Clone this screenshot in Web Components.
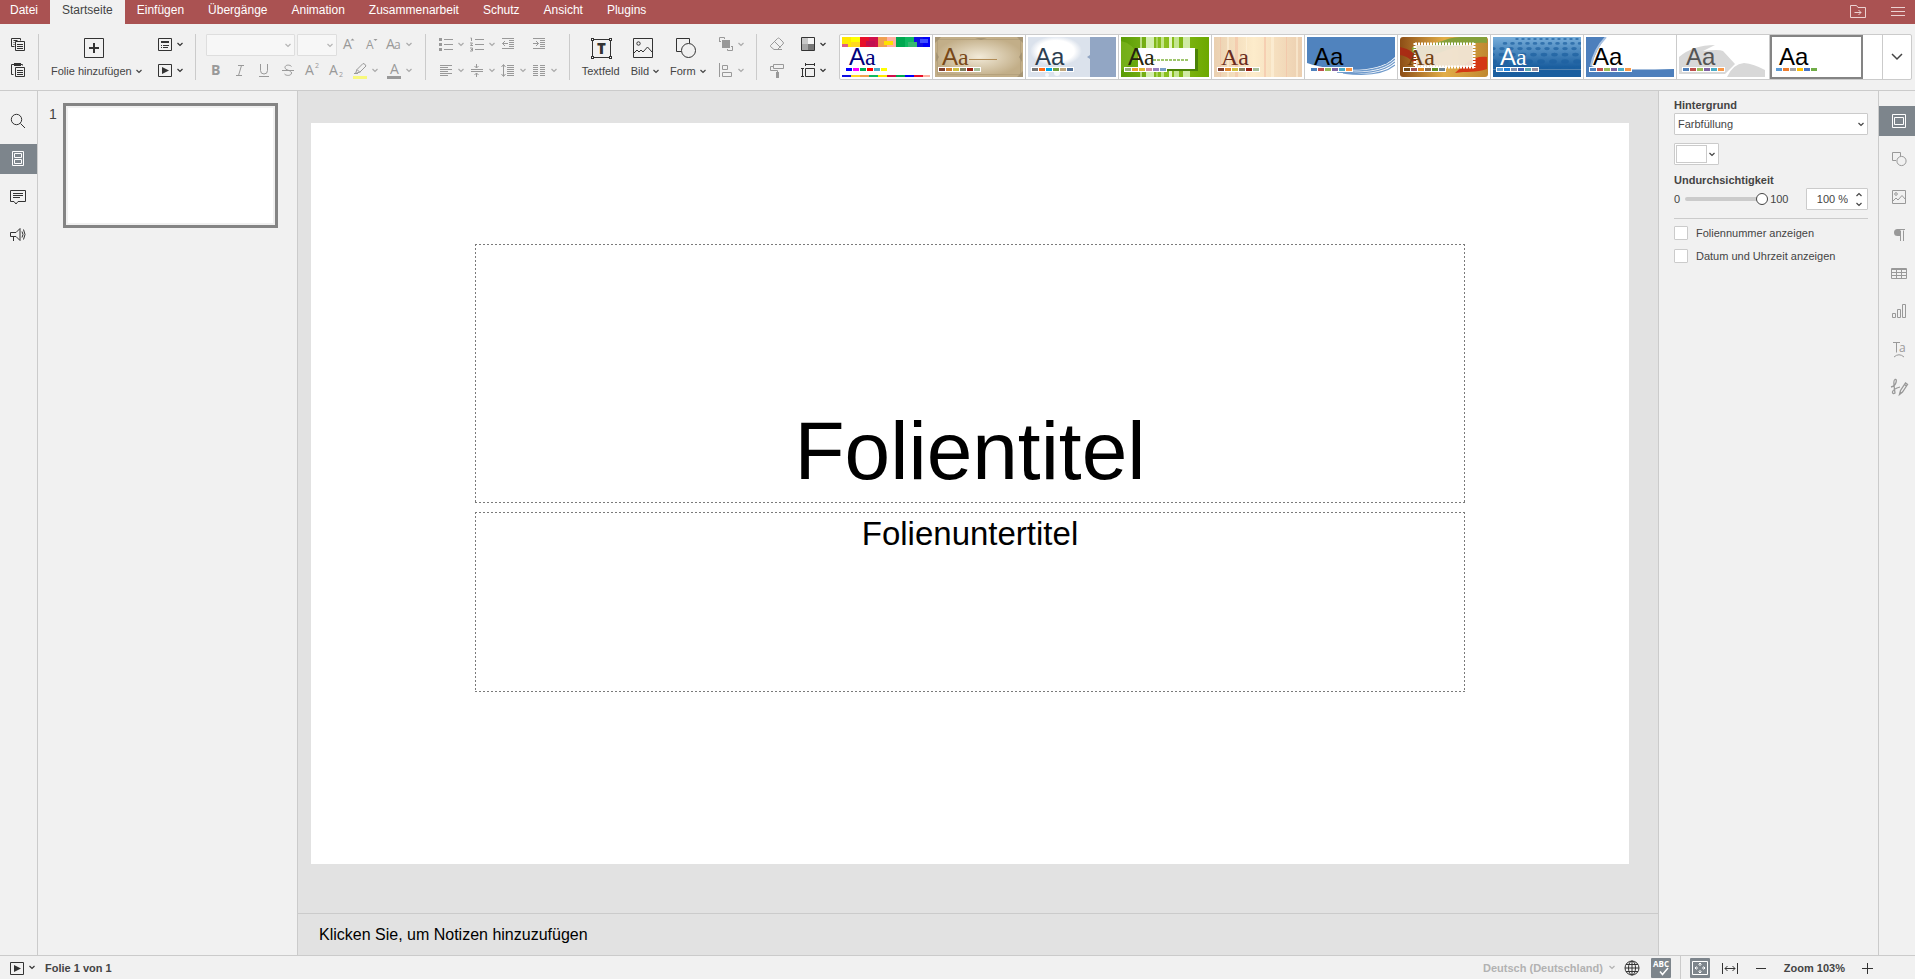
<!DOCTYPE html>
<html lang="de">
<head>
<meta charset="utf-8">
<title>Präsentation</title>
<style>
html, body { margin: 0; height: 100%; }
body { font: 11px/14px "Liberation Sans", Arial, sans-serif; color: #444; background: #f1f1f1; }
</style>
</head>
<body>
<slide-editor></slide-editor>
<script>
const ICONS = {
  copy: '<path d="M4.5 10.5H1.5V2.5h9v2M3.500 4.500h4M3.500 6.500h1M3.500 8.500h1"/><path d="M5.500 5.500h9v9h-9zM7 8.500h6M7 10.500h6M7 12.500h6"/>',
  paste: '<path d="M3.500 12.500h-2v-10h3m6 0h2v1M5.500 5.500h9v9h-9zM7 8.500h6M7 10.500h6M7 12.500h6"/><path d="M4 1h7v3H4z" fill="currentColor" stroke="none"/>',
  layout: '<path d="M1.500 2.500h13v12h-13z"/><path d="M4 5h8v2H4zM4 9h1v1H4zM4 11h1v1H4zM6 9h6v1H6zM6 11h5v1H6z" fill="currentColor" stroke="none"/>',
  play: '<path d="M1.500 2.500h13v12h-13z"/><path d="M5 5l7 3.500L5 12z" fill="currentColor" stroke="none"/>',
  incfont: '<text x="5" y="13" font-size="14">A</text><path d="M12.500 4.500l2-2 2 2z" fill="currentColor" stroke="none"/>',
  decfont: '<text x="4" y="13" font-size="12">A</text><path d="M11.500 3l2 2 2-2z" fill="currentColor" stroke="none"/>',
  case: '<text x="0" y="13" font-size="14">A</text><text x="8" y="13" font-size="12">a</text>',
  bold: '<text x="3" y="13" font-size="14" font-weight="700">B</text>',
  italic: '<path d="M6 3.500h6M4 13.500h6M9.500 3.500l-3 10"/>',
  underline: '<path d="M4.500 2v6.500a3.500 3.500 0 0 0 7 0V2M3 14.500h10"/>',
  strike: '<path d="M11.500 4.500C10 2.500 5 2.500 5 5.500S11.500 8 11.500 11 6 14 4.500 12M2 8.500h12"/>',
  sup: '<text x="1" y="13" font-size="14">A</text><text x="11" y="6" font-size="7">2</text>',
  sub: '<text x="1" y="13" font-size="14">A</text><text x="11" y="15" font-size="7">2</text>',
  marker: '<path d="M3.500 11.500l1.500-4 6-6q2 0 3 2.500l-6 6zM5 7.500l3 3M2 11.500h4"/><path d="M1 14h14v3H1z" fill="#f8f87c" stroke="none"/>',
  fcolor: '<text x="4" y="12" font-size="14">A</text><path d="M1 14h14v3H1z" fill="currentColor" stroke="none"/>',
  bullets: '<path d="M6 3.500h9M6 8.500h9M6 13.500h9"/><path d="M1 2h3v3H1zM1 7h3v3H1zM1 12h3v3H1z" fill="currentColor" stroke="none"/>',
  numbers: '<path d="M6 3.500h9M6 8.500h9M6 13.500h9M1.500 2h1v3M1 7h2.500l-2 2.500H4M1 12h2.500v3H1M2 13.500h1"/>',
  outdent: '<path d="M2 2.500h12M9 4.500h5M9 6.500h5M9 8.500h5M9 10.500h5M2 12.500h12M2.500 7.500H8M5 5L2.500 7.500 5 10"/>',
  indent: '<path d="M2 2.500h12M9 4.500h5M9 6.500h5M9 8.500h5M9 10.500h5M2 12.500h12M2 7.500h5.500M5 5l2.500 2.500L5 10"/>',
  alignl: '<path d="M2 3.500h12M2 5.500h8M2 7.500h12M2 9.500h8M2 11.500h12M2 13.500h8"/>',
  valign: '<path d="M2 7.500h12M2 9.500h12M7.500 2v4M5.500 4l2 2 2-2M7.500 15v-4M5.500 13l2-2 2 2"/>',
  spacing: '<path d="M7 3.500h7M7 5.500h7M7 7.500h7M7 9.500h7M7 11.500h7M7 13.500h7M3.500 3v11M1.500 5l2-2.500 2 2.500M1.500 12l2 2.500 2-2.500"/>',
  columns: '<path d="M2 3.500h5M2 5.500h5M2 7.500h5M2 9.500h5M2 11.500h5M2 13.500h5M9 3.500h5M9 5.500h5M9 7.500h5M9 9.500h5M9 11.500h5M9 13.500h5"/>',
  arrange: '<path d="M1.500 6V1.500h5V3M2 5.500h1M14.500 10v4.500h-5V13M13 10.500h1"/><path d="M4 4h8v8H4z" fill="currentColor" stroke="none"/>',
  align: '<path d="M1.500 1v14M4.500 3.500h5v4h-5zM4.500 10.500h9v4h-9z"/>',
  eraser: '<path d="M1.500 9.500l7-7q1-1 2 0l3.500 3.500q1 1 0 2l-5.500 5.500H5l-3.500-3zM5.500 5.500l6 6M5 13.500h8"/>',
  painter: '<path d="M4.500 2.500h10v4h-10zM4.500 4.500h-3v4h7v2"/><path d="M7 10h3v6H7z" fill="currentColor" stroke="none"/>',
  scheme: '<path d="M2 2h6v6H2z" fill="#c8c8c8" stroke="none"/><path d="M8 2h6v6H8z" fill="#f4f4f4" stroke="none"/><path d="M2 8h6v6H2z" fill="#a6a6a6" stroke="none"/><path d="M8 8h6v6H8z" fill="#777" stroke="none"/><path d="M1.500 1.500h13v13h-13z"/>',
  size: '<path d="M5.500 6.500h9v8h-9zM5 2.500h10M5.500 1v3M14.500 1v3M2.500 6v9M1 6.500h3M1 14.500h3"/>',
  search: '<circle cx="6.500" cy="6.500" r="5.200"/><path d="M10.500 10.500l4.500 4.500"/>',
  slides: '<path d="M2.500.5h11v14h-11zM4.500 2.500h7v4h-7zM4.500 8.500h7v4h-7z"/>',
  comment: '<path d="M.5 1.500h15v11H8l-2 2.500-2-2.500H.5zM3 4.500h10M3 6.500h10M3 8.500h7"/>',
  speaker: '<path d="M.5 5.500h5.500l4-4v12L6 9.500H.5zM3.500 10v4M12 4.500q2 3 0 6M13.500 2.500q3 5 0 10"/>',
  settings: '<path d="M1.500 1.500h13v13h-13zM3.500 4.500h9v7h-9z"/>',
  shape: '<path d="M5 9.500H1.500v-8h8V5"/><circle cx="10.500" cy="10" r="4.600"/>',
  image: '<path d="M1.500 1.500h13v13h-13zM2 12l3-3 2 2 4-4.500 3.500 4"/><circle cx="5" cy="5" r="1.300"/>',
  para: '<path d="M9.500 14V3.500M12.500 14V3.500M7 2.500h7"/><path d="M9 2H6.500a3.500 3.500 0 0 0 0 7H9z" fill="currentColor" stroke="none"/>',
  table: '<path d="M.5 3.500h15v10H.5zM1 4.500h14M.5 7.500h15M.5 10.500h15M5.500 4v9M10.500 4v9"/>',
  chart: '<path d="M1.500 10.500h3v4h-3zM6.500 6.500h3v8h-3zM11.500 1.500h3v13h-3z"/>',
  textart: '<path d="M2 1.500h7M5.500 1.500v10M3 16q5-4.500 10 0"/><text x="8" y="11" font-size="12">a</text>',
  sign: '<path d="M0 8q4-1 5-4.500T4 .5Q2.500 1 3 6t1 8q-2 1.500-2.500-.5T6 9l3-1M8.500 15.500l1-4 5-7.500 2 1.500-5 7.500zM13.500 5.500l2 1.500M9 13l1.500 1" stroke-width="1.300"/>',
  abc: '<text x="0" y="7" font-size="8" font-weight="700">ABC</text><path d="M7 11.500l2.500 3L15 8" stroke-width="1.500"/>',
  globe: '<circle cx="8" cy="8" r="7"/><ellipse cx="8" cy="8" rx="3.500" ry="7"/><path d="M8 1v14M1 8h14M2 4.500h12M2 11.500h12"/>',
  fitslide: '<path d="M.5 1.500h15v13H.5zM8 3v3M8 10v3M3 8h3M10 8h3M6.500 4.500L8 3l1.500 1.500M6.500 11.500L8 13l1.500-1.500M4.500 6.500L3 8l1.500 1.500M11.500 6.500L13 8l-1.500 1.500"/>',
  fitwidth: '<path d="M.5 3v11M15.500 3v11M3 8.500h10M5.500 6L3 8.500 5.500 11M10.500 6L13 8.500 10.500 11"/>',
  minus: '<path d="M3 8.500h10"/>',
  plus: '<path d="M3 8.500h11M8.500 3v11"/>',
  folder: '<path d="M.5 14.500v-12h6l1.500 2h7.500v10zM4.500 9.500h6.500M8.500 7l2.500 2.500L8.500 12"/>',
  menu: '<path d="M1 4.500h14M1 8.500h14M1 12.500h14"/>',
  addslide: '<path d="M2.500 2.500h19v19h-19z"/><path d="M12 7v10M7 12h10" stroke-width="2"/>',
  textbox: '<path d="M3.500 3.500h18v18h-18z"/><path d="M2 2h3v3H2zM20 2h3v3h-3zM2 20h3v3H2zM20 20h3v3h-3z" fill="currentColor" stroke="none"/><path d="M3 3h1v1H3zM21 3h1v1h-1zM3 21h1v1H3zM21 21h1v1h-1z" fill="#fff" stroke="none"/><text x="8" y="18" font-size="15" font-weight="800">T</text>',
  bigimage: '<path d="M2.500 2.500h19v19h-19zM3 17l3-3 2 2 2-2 2 2 4.500-5 4.500 5"/><circle cx="7.500" cy="7.500" r="1.700"/>',
  bigshape: '<path d="M7 15.500H2.500v-13h13V7"/><circle cx="14.500" cy="14.500" r="7"/>',
};
const define = (name, html) => customElements.define(name, class extends HTMLElement {
  constructor() {
    super();
    this.attachShadow({ mode: 'open' });
  }
  connectedCallback() {
    this.shadowRoot.innerHTML = typeof html === 'function' ? html(this) : html;
  }
});

/* One line icon; "large" uses the 24 pixel grid. */
define('ui-icon', el => {
  const s = el.hasAttribute('large') ? 24 : 16;
  return `<style>:host{display:block;width:${s}px;height:${s}px;flex:none}
  svg{display:block;overflow:visible;fill:none;stroke:currentColor}
  text{fill:currentColor;stroke:none;font-family:"Open Sans",sans-serif}</style>
  <svg width="${s}" height="${s}" viewBox="0 0 ${s} ${s}" aria-hidden="true">${ICONS[el.getAttribute('name')]}</svg>`;
});

define('ui-chevron', el => `<style>:host{display:block;flex:none;width:6px}svg{display:block;fill:none;stroke:currentColor;stroke-width:1.200}</style>
  <svg width="6" height="5" viewBox="0 0 6 5" aria-hidden="true"><path d="${el.hasAttribute('up') ? 'M.5 4L3 1.500 5.500 4' : 'M.5 1L3 3.500 5.500 1'}"/></svg>`);

/* Small toolbar button: icon and, when "menu" is set, an arrow. */
define('tool-button', el => `<style>
  :host{display:block;flex:none;color:#333}
  :host([off]){color:#999}
  :host([off]) ui-chevron{color:#aaa}
  :host([wide]){width:26px}
  button{display:flex;align-items:center;gap:4px;height:20px;padding:0;border:0;background:none;color:inherit;font:inherit}
  </style><button type="button" aria-label="${el.getAttribute('label') || ''}" ${el.hasAttribute('off') ? 'disabled' : ''}>
  <ui-icon name="${el.getAttribute('icon')}"></ui-icon>${el.hasAttribute('menu') ? '<ui-chevron></ui-chevron>' : ''}</button>`);

/* Tall toolbar button with a caption. */
define('big-button', el => `<style>
  :host{display:block;flex:none;color:#333}
  button{display:flex;flex-direction:column;align-items:center;gap:4px;padding:2px 0 0;border:0;background:none;color:inherit;font:inherit}
  .cap{display:flex;align-items:center;gap:4px;line-height:14px;color:#444;white-space:nowrap}
  :host([menu]) ui-icon{margin-right:4px}
  </style><button type="button"><ui-icon large name="${el.getAttribute('icon')}"></ui-icon>
  <span class="cap"><slot></slot>${el.hasAttribute('menu') ? '<ui-chevron></ui-chevron>' : ''}</span></button>`);

define('tool-group', `<style>
  :host{display:flex;flex:none;gap:15px;height:46px;padding:0 12px;border-right:1px solid #cbcbcb}
  :host([last]){border:0;padding-right:13px}
  :host([tight]){gap:11px}
  </style><slot></slot>`);

define('tool-stack', `<style>
  :host{display:grid;grid-template-rows:20px 20px;gap:6px}
  ::slotted(div){display:flex;gap:8px;align-items:center}
  :host([lists]) ::slotted(div){gap:5px}
  </style><slot></slot>`);

define('ui-select', el => `<style>
  :host{display:grid;flex:none;height:22px;align-items:center;color:#444}
  :host([off]){color:#b5b5b5}
  select,ui-chevron{grid-area:1/1}
  select{appearance:none;width:100%;height:22px;padding:0 12px 0 3px;border:1px solid #cbcbcb;border-radius:1px;background:#fff;font:inherit;color:#444;opacity:1}
  :host([off]) select{border-color:#dedede;background:#f7f7f7}
  ui-chevron{justify-self:end;margin-right:4px;pointer-events:none}
  </style><select aria-label="${el.getAttribute('label')}" ${el.hasAttribute('off') ? 'disabled' : ''}><option>${el.getAttribute('value') || ''}</option></select><ui-chevron></ui-chevron>`);

define('tab-bar', `<style>
  :host{display:flex;height:24px;background:#aa5252;color:#fff;font-size:12px}
  nav{display:flex;flex:1;margin-left:-2px}
  nav button{height:24px;padding:0 12px 4px;border:0;background:none;color:inherit;font:inherit;line-height:20px;white-space:nowrap}
  nav button[aria-current]{background:#f1f1f1;color:#444}
  .tools{display:flex;gap:24px;padding-right:9px}
  .tools button{padding:2px 0 0;border:0;background:none;color:#ecd2d2;height:20px}
  </style><nav aria-label="Registerkarten"><button>Datei</button><button aria-current="page">Startseite</button><button>Einfügen</button><button>Übergänge</button><button>Animation</button><button>Zusammenarbeit</button><button>Schutz</button><button>Ansicht</button><button>Plugins</button></nav>
  <div class="tools"><button aria-label="Dateispeicherort öffnen"><ui-icon name="folder"></ui-icon></button><button aria-label="Menü"><ui-icon name="menu"></ui-icon></button></div>`);

/* Theme previews, each on an 88 by 40 canvas. */
const R = (x, y, w, h, f, more = '') => `<rect x="${x}" y="${y}" width="${w}" height="${h}" fill="${f}" ${more}/>`;
const SANS = 'Liberation Sans', SERIF = 'Liberation Serif';
const mosaic = ['#ffe800','#ffd820','#e8102a','#d0104a','#f0a050','#ffb0a0','#00a850','#10b860','#1010e0','#0000f8'];
let dots = '';
for (let r = 0; r < 6; r++) for (let c = 0; c < 14; c++)
  dots += `<ellipse cx="${c * (6 + r * 1.5) + 24 - r * 12}" cy="${2 + r * 4 + r * r * .4}" rx="${1.8 + r * .5}" ry="${1 + r * .3}" fill="#1d5f9f" opacity=".7"/>`;
const OFFICE = '#4f81bd #c0504d #9bbb59 #8064a2 #4bacc6 #f79646';
const THEMES = [
  { c: '#00007c', f: [SANS, SERIF], s: 'blue #f0f #00b050 red #4bacc6 #ff0',
    art: R(0,0,88,40,'#fff') + mosaic.map((m, i) => R(i * 9, 0, 9, 10, m) + R(i * 9, 38, 9, 2, mosaic[(i * 3 + 8) % 10])).join('') + R(9,0,9,5,'#ff0') + R(0,7,6,3,'#e06080') + R(24,4,9,5,'#c01050') + R(42,4,9,4,'#ffe000') + R(66,5,9,5,'#38b870') + R(78,2,8,4,'#4050ff') },
  { c: '#784818', f: [SANS, SERIF], s: '#7f3f2f #d08030 #d0c040 #808060 #982010 #a8c098',
    art: '<radialGradient id="g2"><stop stop-color="#f2ead8"/><stop offset="1" stop-color="#c2ae88"/></radialGradient>' + R(0,0,88,40,'url(#g2)') + '<path d="M2.500 2.500h83v35h-83z" fill="none" stroke="#b5a27d"/><path d="M0 0h6L0 6zM88 0h-6l6 6zM88 40h-6l6-6zM40 1h12l-6 2zM1 15l3 5-3 5zM87 15l-3 5 3 5z" fill="#9b8b6e" opacity=".7"/><path d="M34 22.500h28" stroke="#b08a54"/>' },
  { c: '#2c3e50', f: [SANS, SANS], s: '#777 #ff6a13 #00a4e4 #70a040 #c0a880 #507098',
    art: '<radialGradient id="g3"><stop offset=".7" stop-color="#fff"/><stop offset="1" stop-color="#dbe2ec"/></radialGradient>' + R(0,0,88,40,'#dbe2ec') + '<ellipse cx="28" cy="14" rx="26" ry="15" fill="url(#g3)"/><circle cx="29" cy="36" r="3" fill="#f4f6f9"/><circle cx="19" cy="38" r="2" fill="#f4f6f9"/>' + R(62,0,26,40,'#92a6c4') + '<path d="M62 18l-3 2 3 2z" fill="#92a6c4"/>' },
  { c: '#26260e', f: [SANS, SERIF], s: '#98b078 #f0a030 #e0b830 #d090a0 #9880c0 #78a0c8',
    art: '<linearGradient id="g4"><stop stop-color="#5a9c06"/><stop offset=".5" stop-color="#8cc020"/><stop offset="1" stop-color="#6ca800"/></linearGradient>' + R(0,0,88,40,'url(#g4)') + '<path d="M0 4q12 2 18 16L0 34z" fill="#83ba25" opacity=".6"/>' + R(19,0,2,40,'#b8dc80') + R(25,0,8,40,'#d4eeb0') + R(35,0,2,40,'#a8d458') + R(40,0,3,40,'#c4e588') + R(48,0,3,40,'#e4f5c4') + R(53,0,5,40,'#c4e590') + R(62,0,7,40,'#d0eaa4') + R(17,12,60,22,'#4b8207') + R(17,11,57,21,'#fff') + '<path d="M32 23h36" stroke="#9fc66d" stroke-width="2" stroke-dasharray="3 1"/>' },
  { c: '#6a2c20', f: [SERIF, SERIF], s: '#7f3f2f #e08830 #d0c040 #888060 #982010 #a8c098',
    art: '<linearGradient id="g5"><stop stop-color="#ead0b0"/><stop offset=".45" stop-color="#fdeccb"/><stop offset="1" stop-color="#eccfb0"/></linearGradient>' + R(0,0,88,40,'url(#g5)') + [6,13,21,32,50,57,72,82].map((x, i) => R(x,0,i % 3 + 1,40,i % 2 ? '#fff6e0' : '#f3b9a0','opacity=".5"')).join('') },
  { c: '#000', f: [SANS, SANS], s: OFFICE,
    art: R(0,0,88,40,'#fff') + '<path d="M0 0h88v20C76 33 52 34 28 32Q12 30 0 26z" fill="#5083be"/><path d="M88 22C76 34 54 36 24 33M88 25C76 36 56 37 30 35M88 28C76 38 58 39 36 36" fill="none" stroke="#6f9acb" stroke-width="1.300"/>' },
  { c: '#704010', f: [SERIF, SERIF], s: '#704818 #a05050 #e08820 #886848 #609020 #708088',
    art: '<linearGradient id="g7"><stop stop-color="#8d4e16"/><stop offset=".5" stop-color="#e2ae48"/><stop offset="1" stop-color="#c08830"/></linearGradient>' + R(0,0,88,40,'url(#g7)','rx="3"') + '<path d="M12 10C30 12 45 0 60 0h27v6C55 3 40 22 12 20z" fill="#84a03a"/><path d="M0 10C20 14 20 30 40 34H30C14 32 14 20 0 18z" fill="#a82c14"/><path d="M55 36C66 26 74 18 87 20v12C76 36 66 34 55 36z" fill="#d43814"/><path d="M16 8h57v22H16z" fill="#f1e6d8" opacity=".93"/><path d="M15 7h59M15 30h59" stroke="#fff" stroke-width="3" stroke-dasharray="2 1"/><path d="M15 6v25M74 6v25" stroke="#fff" stroke-width="3" stroke-dasharray="2 1"/>' },
  { c: '#fff', f: [SANS, SERIF], s: '#60a0d8 #2080d8 #8090b0 #4060b0 #60a8b0 #9890a0',
    art: '<linearGradient id="g8" x2="0" y2="1"><stop stop-color="#78aeda"/><stop offset=".75" stop-color="#1a5e9f"/></linearGradient>' + R(0,0,88,40,'url(#g8)') + dots + '<path d="M0 32.500h88" stroke="#5684b0"/>' },
  { c: '#000', f: [SANS, SANS], s: OFFICE,
    art: R(0,0,88,40,'#fff') + '<path d="M0 0h20Q10 12 5 29q12 5 83 3v8H0z" fill="#4d7fbc"/><path d="M20 0Q8 12 5 29" fill="none" stroke="#a8c2e2" stroke-width="2"/>' },
  { c: '#555', f: [SANS, SANS], s: OFFICE,
    art: R(0,0,88,40,'#fff') + '<path d="M0 20Q14 8 36 8l-12 6q16-2 20 0l12 13-10 10H0zM48 40q6-13 17-14 10 1 21 7v7z" fill="#d8d8d8"/>' },
  { c: '#000', f: [SANS, SANS], s: '#5b9bd5 #ed7d31 #a5a5a5 #ffc000 #4472c4 #70ad47', art: R(0,0,88,40,'#fff'), on: 1 },
];

define('theme-gallery', `<style>
  :host{display:flex;flex:1;min-width:0;height:44px;border:1px solid #cbcbcb;border-radius:2px;background:#fff}
  .list{display:flex;flex:1;overflow:hidden;border-right:1px solid #cbcbcb}
  .list button{flex:none;width:93px;height:44px;padding:2px;border:0;border-right:1px solid #cbcbcb;background:none}
  .list button[aria-pressed=true]{border:0;box-shadow:inset 0 0 0 2px #848484}
  svg{display:block}
  .more{width:28px;padding:0 0 0 8px;border:0;background:none;color:#444}
  </style><div class="list">${THEMES.map((t, i) => `<button type="button" aria-pressed="${!!t.on}" aria-label="Design ${i + 1}"><svg width="88" height="40" viewBox="0 0 88 40">${t.art}
  <text y="28" font-size="24" fill="${t.c}"><tspan x="7" font-family="${t.f[0]}">A</tspan><tspan font-family="${t.f[1]}">a</tspan></text>
  ${R(3,30,43,5,'#fff')}${t.s.split(' ').map((c, k) => R(4 + k * 7, 31, 6, 3, c)).join('')}</svg></button>`).join('')}</div>
  <button class="more" aria-label="Weitere Designs"><svg width="12" height="8" viewBox="0 0 12 8" fill="none" stroke="currentColor" stroke-width="1.500"><path d="M1 1l5 5 5-5"/></svg></button>`);

define('main-toolbar', `<style>
  :host{display:flex;padding:10px 3px 10px 0;border-bottom:1px solid #cbcbcb;background:#f1f1f1}
  .first{padding-left:10px}
  .fonts{padding:0 13px 0 10px}
  .name{width:89px}
  .size{width:40px}
  .combos{display:flex;gap:2px;align-self:start;width:124px}
  .marks{padding-left:2px}
  .arrange{padding-left:1px}
  </style>
  <tool-group class="first"><tool-stack><div><tool-button icon="copy" label="Kopieren"></tool-button></div><div><tool-button icon="paste" label="Einfügen"></tool-button></div></tool-stack></tool-group>
  <tool-group><big-button icon="addslide" menu>Folie hinzufügen</big-button>
    <tool-stack><div><tool-button icon="layout" label="Folienlayout" menu></tool-button></div><div><tool-button icon="play" label="Vorschau" menu></tool-button></div></tool-stack></tool-group>
  <tool-group class="fonts"><tool-stack>
    <div><div class="combos"><ui-select class="name" label="Schriftart" off></ui-select><ui-select class="size" label="Schriftgröße" off></ui-select></div>
      <tool-button icon="incfont" label="Schrift vergrößern" off></tool-button><tool-button icon="decfont" label="Schrift verkleinern" off></tool-button><tool-button icon="case" label="Groß-/Kleinschreibung" menu off></tool-button></div>
    <div class="marks"><tool-button icon="bold" label="Fett" off></tool-button><tool-button icon="italic" label="Kursiv" off></tool-button><tool-button icon="underline" label="Unterstrichen" off></tool-button><tool-button icon="strike" label="Durchgestrichen" off></tool-button><tool-button icon="sup" label="Hochgestellt" off></tool-button><tool-button icon="sub" label="Tiefgestellt" off></tool-button><tool-button icon="marker" label="Texthervorhebung" menu off></tool-button><tool-button icon="fcolor" label="Schriftfarbe" menu off></tool-button></div>
  </tool-stack></tool-group>
  <tool-group><tool-stack lists>
    <div><tool-button icon="bullets" label="Aufzählung" menu off></tool-button><tool-button icon="numbers" label="Nummerierung" menu off></tool-button><tool-button wide icon="outdent" label="Einzug verkleinern" off></tool-button><tool-button wide icon="indent" label="Einzug vergrößern" off></tool-button></div>
    <div><tool-button icon="alignl" label="Horizontale Ausrichtung" menu off></tool-button><tool-button icon="valign" label="Vertikale Ausrichtung" menu off></tool-button><tool-button icon="spacing" label="Zeilenabstand" menu off></tool-button><tool-button icon="columns" label="Spalten" menu off></tool-button></div>
  </tool-stack></tool-group>
  <tool-group tight><big-button icon="textbox">Textfeld</big-button><big-button icon="bigimage" menu>Bild</big-button><big-button icon="bigshape" menu>Form</big-button>
    <tool-stack class="arrange"><div><tool-button icon="arrange" label="Anordnen" menu off></tool-button></div><div><tool-button icon="align" label="Ausrichten" menu off></tool-button></div></tool-stack></tool-group>
  <tool-group last>
    <tool-stack><div><tool-button icon="eraser" label="Formatierung löschen" off></tool-button></div><div><tool-button icon="painter" label="Format übertragen" off></tool-button></div></tool-stack>
    <tool-stack><div><tool-button icon="scheme" label="Farbschema" menu></tool-button></div><div><tool-button icon="size" label="Foliengröße" menu></tool-button></div></tool-stack></tool-group>
  <theme-gallery></theme-gallery>`);

/* Vertical strip of panel switches: "icons" lists them, "active" is the index of the open one. */
define('side-rail', el => `<style>
  :host{display:flex;flex-direction:column;gap:8px;padding-top:15px;background:#f1f1f1;color:#333}
  :host([muted]){color:#999}
  button{display:flex;align-items:center;height:30px;width:100%;padding:0 0 0 10px;border:0;background:none;color:inherit}
  :host([muted]) button{padding-left:12px}
  button[aria-pressed=true]{background:#7d858c;color:#fff}
  </style>${el.getAttribute('icons').split(' ').map((n, i) => `<button type="button" aria-label="${n}" aria-pressed="${i === +el.getAttribute('active')}"><ui-icon name="${n}"></ui-icon></button>`).join('')}`);

define('slide-list', `<style>
  :host{display:block;padding:12px 19px 0 11px;background:#f1f1f1;border:solid #cbcbcb;border-width:0 1px}
  ol{display:flex;margin:0;padding:0;list-style:none}
  li{display:grid;grid-template-columns:14px 1fr;flex:1}
  .no{font-size:14px;line-height:22px}
  .thumb{border:3px solid #848484;padding:2px;background:#f1f1f1}
  .thumb div{background:#fff;height:115px}
  </style><ol><li><span class="no">1</span><div class="thumb"><div></div></div></li></ol>`);

define('slide-canvas', `<style>
  :host{display:grid;grid-template-rows:1fr 42px;min-width:0;background:#e2e2e2;color:#000}
  .view{padding:32px 29px 0 13px;overflow:hidden}
  .slide{display:grid;aspect-ratio:16/9;background:#fff;grid-template-columns:164fr 990fr 164fr;grid-template-rows:121fr 259fr 9fr 180fr 172fr}
  .ph{grid-column:2;min-height:0;text-align:center;
    --h:repeating-linear-gradient(90deg,#7a7a7a 0 2px,#0000 2px 4px);--v:repeating-linear-gradient(#7a7a7a 0 2px,#0000 2px 4px);
    background:var(--h) top/100% 1px,var(--h) bottom/100% 1px,var(--v) left/1px 100%,var(--v) right/1px 100%;background-repeat:no-repeat}
  h1,h2,p{margin:0;font-weight:400}
  .title{grid-row:2;display:flex;align-items:end;justify-content:center;padding-bottom:5px}
  h1{font-size:82px;line-height:94px}
  .sub{grid-row:4;padding-top:3px}
  h2{font-size:33px;line-height:38px}
  .notes{border-top:1px solid #cbcbcb;padding:12px 21px 0;font-size:16px;line-height:18px}
  </style><div class="view"><div class="slide"><div class="ph title"><h1>Folientitel</h1></div><div class="ph sub"><h2>Folienuntertitel</h2></div></div></div>
  <div class="notes"><p>Klicken Sie, um Notizen hinzuzufügen</p></div>`);

define('slide-settings', `<style>
  :host{display:flex;flex-direction:column;padding:7px 10px 0 15px;background:#f1f1f1;border:solid #cbcbcb;border-width:0 1px}
  b{display:block;line-height:14px;margin-bottom:1px}
  .swatch{display:flex;align-items:center;gap:2px;width:45px;height:22px;margin:8px 0;padding:1px;border:1px solid #cbcbcb;border-radius:1px;background:#fff;color:#444}
  .swatch i{box-sizing:border-box;width:31px;height:18px;border:1px solid #cbcbcb}
  .row{display:flex;align-items:center;height:22px}
  .row input[type=range]{appearance:none;width:83px;height:14px;margin:0 2px 0 5px;background:none}
  input[type=range]::-webkit-slider-runnable-track{height:4px;border-radius:2px;background:#cbcbcb}
  input[type=range]::-webkit-slider-thumb{appearance:none;box-sizing:border-box;width:12px;height:12px;margin-top:-4px;border:1px solid #444;border-radius:50%;background:#fff}
  .spin{display:flex;align-items:center;box-sizing:border-box;width:62px;height:22px;margin-left:auto;border:1px solid #cbcbcb;border-radius:1px;background:#fff}
  .spin input{width:41px;padding:0;border:0;background:none;text-align:right;font:inherit;color:inherit}
  .spin span{display:grid;gap:5px;margin-left:8px}
  hr{width:100%;height:1px;margin:8px 0 7px;border:0;background:#cbcbcb}
  label{display:flex;align-items:center;gap:8px;height:14px;margin-bottom:9px}
  label input{appearance:none;box-sizing:border-box;width:14px;height:14px;margin:0;border:1px solid #cbcbcb;border-radius:1px;background:#fff}
  </style><b>Hintergrund</b><ui-select label="Hintergrund" value="Farbfüllung"></ui-select>
  <button class="swatch" aria-label="Füllfarbe"><i></i><ui-chevron></ui-chevron></button>
  <b>Undurchsichtigkeit</b>
  <div class="row"><span>0</span><input type="range" min="0" max="100" value="100" aria-label="Undurchsichtigkeit"><span>100</span><div class="spin"><input type="text" value="100 %" aria-label="Undurchsichtigkeit in Prozent"><span><ui-chevron up></ui-chevron><ui-chevron></ui-chevron></span></div></div>
  <hr><label><input type="checkbox">Foliennummer anzeigen</label><label><input type="checkbox">Datum und Uhrzeit anzeigen</label>`);

define('status-bar', `<style>
  :host{display:flex;align-items:center;height:23px;padding:0 40px 0 9px;border-top:1px solid #cbcbcb;background:#f1f1f1;font-weight:700;white-space:nowrap}
  .page{margin-left:10px;flex:1}
  button{display:flex;align-items:center;padding:0;border:0;background:none;color:#333;font:inherit}
  .lang{gap:6px;color:#b2b2b2;margin-right:9px}
  .on{width:20px;height:20px;justify-content:center;border-radius:1px;background:#7d858c;color:#fff}
  .spell{margin-left:11px}
  .end{display:flex;align-items:center;align-self:stretch}
  .line{align-self:stretch;width:1px;margin:0 9px;background:#cbcbcb}
  .zoom{margin:0 14px 0 15px}
  .w{margin:0 15px 0 12px}
  </style><tool-button icon="play" label="Vorschau" menu></tool-button><span class="page">Folie 1 von 1</span>
  <div class="end"><button class="lang">Deutsch (Deutschland)<ui-chevron></ui-chevron></button><button aria-label="Sprache"><ui-icon name="globe"></ui-icon></button>
  <button class="on spell" aria-label="Rechtschreibprüfung"><ui-icon name="abc"></ui-icon></button><span class="line"></span>
  <button class="on" aria-label="Folie anpassen"><ui-icon name="fitslide"></ui-icon></button><button class="w" aria-label="Breite anpassen"><ui-icon name="fitwidth"></ui-icon></button>
  <button aria-label="Verkleinern"><ui-icon name="minus"></ui-icon></button><span class="zoom">Zoom 103%</span><button aria-label="Vergrößern"><ui-icon name="plus"></ui-icon></button></div>`);

define('slide-editor', `<style>
  :host{display:grid;grid-template-rows:24px auto 1fr auto;min-height:100vh}
  main{display:grid;grid-template-columns:37px 261px 1fr 221px 36px;min-height:0}
  </style><tab-bar></tab-bar><main-toolbar></main-toolbar>
  <main><side-rail icons="search slides comment speaker" active="1"></side-rail><slide-list></slide-list><slide-canvas></slide-canvas><slide-settings></slide-settings><side-rail muted icons="settings shape image para table chart textart sign" active="0"></side-rail></main>
  <status-bar></status-bar>`);
</script>
</body>
</html>
